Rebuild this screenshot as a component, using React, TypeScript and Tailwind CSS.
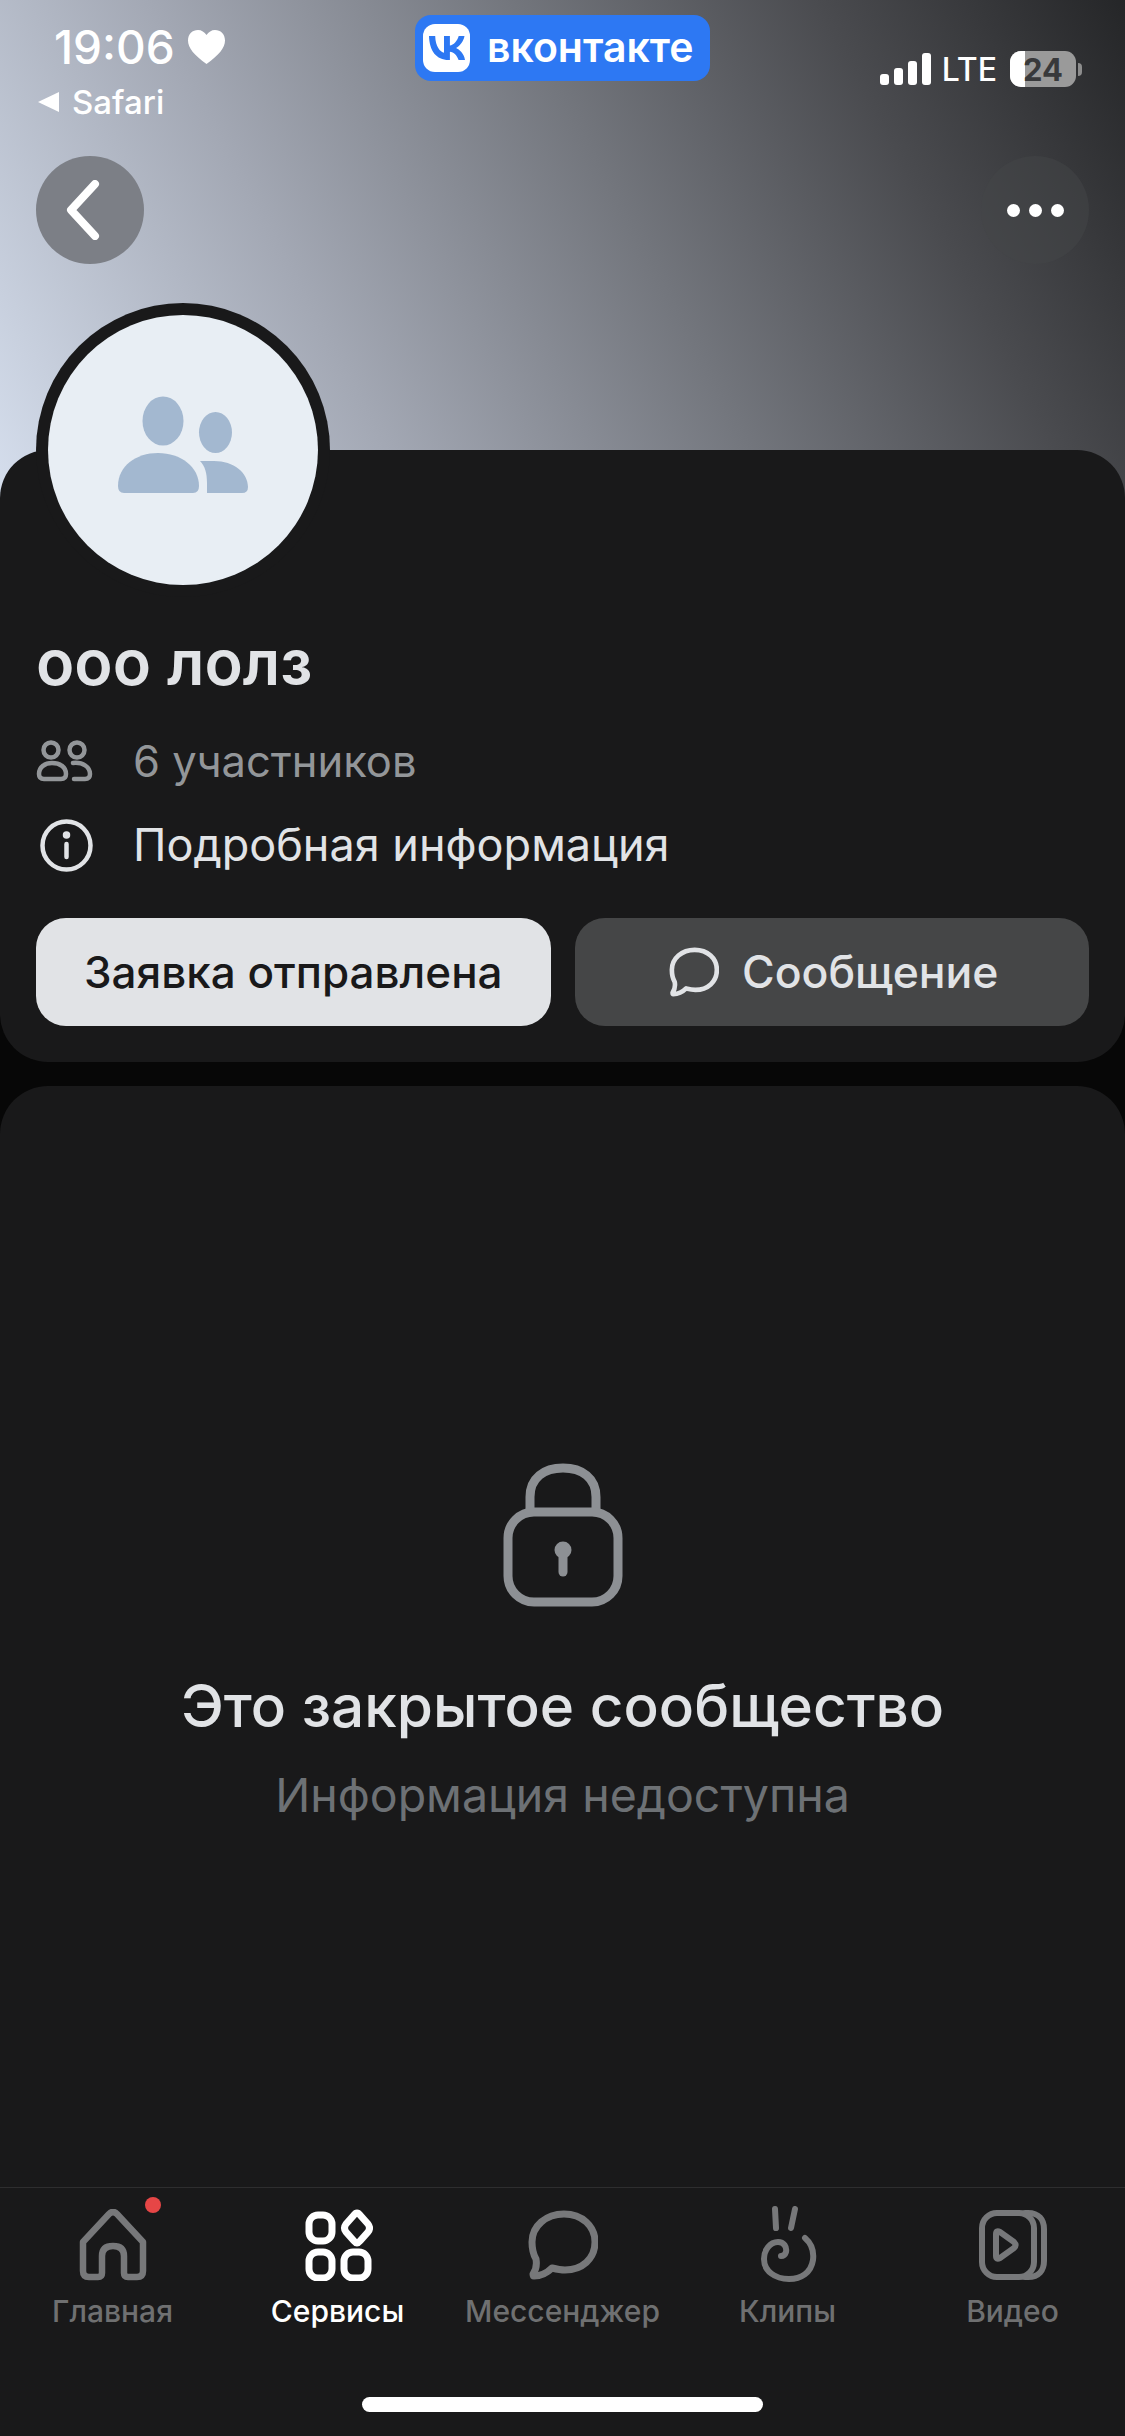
import type { ReactNode } from 'react';

const FONT = "font-['Inter','Noto_Sans',sans-serif]";

function HomeIcon() {
  return (
    <svg width="70" height="72" viewBox="0 0 70 72" fill="none" stroke="#77787a" strokeWidth="6.500" strokeLinejoin="round" strokeLinecap="round">
      <path d="M5 33 L31 5 Q35 1 39 5 L65 33 V62 Q65 68 59 68 H50 Q46 68 46 64 V47 Q46 37 35 37 Q24 37 24 47 V64 Q24 68 20 68 H11 Q5 68 5 62 Z" />
    </svg>
  );
}

function ServicesIcon() {
  return (
    <svg width="70" height="72" viewBox="0 0 70 72" fill="none" stroke="#fff" strokeWidth="7">
      <rect x="6" y="6" width="23" height="26" rx="9" />
      <rect x="6" y="43" width="23" height="26" rx="9" />
      <rect x="41" y="43" width="24" height="26" rx="9" />
      <path d="M51 6 Q54 2 57 6 L65 15 Q68 19 65 23 L57 32 Q54 36 51 32 L43 23 Q40 19 43 15 Z" strokeLinejoin="round" />
    </svg>
  );
}

function ChatIcon({ size, color, sw }: { size: number; color: string; sw: number }) {
  return (
    <svg width={size} height={size} viewBox="0 0 70 70" fill="none" stroke={color} strokeWidth={sw} strokeLinejoin="round" strokeLinecap="round">
      <path d="M36 4 C54 4 67 16 67 32 C67 49 54 60 37 60 C32 60 28 59 24 58 C20 62 13 66 6 66 C5 66 5 65 5 64 C8 60 9 55 8 49 C5 44 4 38 4 32 C4 16 18 4 36 4 Z" />
    </svg>
  );
}

function ClipsIcon() {
  return (
    <svg width="60" height="78" viewBox="0 0 60 78" fill="none" stroke="#77787a" strokeWidth="6" strokeLinecap="round">
      <path d="M17 3 L18 22" />
      <path d="M37 3 L33 22" />
      <path d="M47 32 C54 38 56 46 55 54 C53 67 43 73 31 73 C17 73 6 65 6 53 C6 44 12 36 20 36 C26 36 29 41 28 46 C27 49 25 50 23 50" />
    </svg>
  );
}

function VideoIcon() {
  return (
    <svg width="68" height="70" viewBox="0 0 68 70" fill="none" stroke="#77787a" strokeWidth="6" strokeLinejoin="round" strokeLinecap="round">
      <rect x="3" y="3" width="52" height="64" rx="15" />
      <path d="M46 3 H49 C60 3 65 10 65 19 V51 C65 60 60 67 49 67 H46" />
      <path d="M17 24 Q17 20 21 22 L35 32 Q38 35 35 38 L21 48 Q17 50 17 46 Z" />
    </svg>
  );
}

function Tab({ icon, label, active, dot }: { icon: ReactNode; label: string; active?: boolean; dot?: boolean }) {
  return (
    <div className="relative flex flex-col items-center">
      {dot && <span className="absolute left-[145px] -top-[12px] w-[16px] h-[16px] rounded-full bg-[#e64646]" />}
      <div className="h-[72px] flex items-center justify-center">{icon}</div>
      <span className={`mt-[12px] text-[30px] leading-[36px] font-medium ${active ? 'text-white' : 'text-[#6f7071]'}`}>{label}</span>
    </div>
  );
}

export default function App() {
  return (
    <div className={`${FONT} w-[1125px] h-[2436px] flex flex-col bg-[#070707] overflow-hidden`}>
      {/* Cover */}
      <div className="h-[510px] -mb-[60px] shrink-0 px-[36px] bg-[linear-gradient(62deg,#d6dfee_0%,#a3a8b4_30%,#73767d_56%,#4a4b4f_78%,#252628_100%)]">
        <div className="h-[156px] -mx-[36px] grid grid-cols-[1fr_295px_1fr]">
          <div className="pl-[37px] pt-[24px] text-white">
            <div className="flex items-center pl-[17px]">
              <span className="text-[46px] leading-[46px] font-medium">19:06</span>
              <svg className="ml-[13px]" width="37" height="34" viewBox="0 0 37 34" fill="#fff">
                <path d="M18.5 34 C6 25 0 18 0 10.5 C0 4 4.500 0 10 0 C13.500 0 16.500 2 18.500 5 C20.500 2 23.500 0 27 0 C32.500 0 37 4 37 10.500 C37 18 31 25 18.500 34 Z" />
              </svg>
            </div>
            <div className="flex items-center mt-[13px]">
              <svg width="22" height="22" viewBox="0 0 22 22" fill="#fff"><path d="M22 1 V21 L1 11 Z" /></svg>
              <span className="ml-[13px] text-[33px] leading-[38px] font-medium">Safari</span>
            </div>
          </div>

          <div className="pt-[15px]">
            <div className="h-[66px] rounded-[16px] bg-[#2d78f3] flex items-center pl-[8px] pb-[2px]">
              <div className="w-[47px] h-[48px] mt-[2px] rounded-[12px] bg-white flex items-center justify-center">
                <svg width="36" height="24" viewBox="0 0 36 24" fill="#2d78f3">
                  <path d="M19.600 24 C7.400 24 .4 15 0 0 H6.200 C6.400 11 11.300 15.700 15 16.700 V0 H20.900 V9.500 C24.500 9.100 28.400 5 29.700 0 H35.500 C34.500 5.900 30.200 10.200 27.100 12 C30.200 13.500 35.100 17.300 36 24 H29.600 C28.200 19.500 24.700 16.100 20.900 15.700 V24 Z" />
                </svg>
              </div>
              <span className="ml-[17px] text-[41px] leading-none font-semibold text-white">вконтакте</span>
            </div>
          </div>

          <div className="pt-[51px] pr-[43px] flex items-start justify-end">
            <div className="flex items-end gap-[5px] h-[33px] mt-[1px]">
              <span className="w-[9px] h-[11px] rounded-[3px] bg-white" />
              <span className="w-[9px] h-[17px] rounded-[3px] bg-white" />
              <span className="w-[9px] h-[24px] rounded-[3px] bg-white" />
              <span className="w-[9px] h-[32px] rounded-[3px] bg-white" />
            </div>
            <span className="ml-[11px] mt-[3px] text-[32px] leading-[32px] font-medium text-white">LTE</span>
            <div className="ml-[13px] relative w-[66px] h-[36px] rounded-[11px] overflow-hidden bg-[#9a9a9a]">
              <div className="absolute inset-y-0 left-0 w-[15px] bg-white" />
              <span className="absolute inset-0 flex items-center justify-center text-[31px] leading-none font-bold text-[#38393b]">24</span>
            </div>
            <span className="ml-[2px] mt-[12px] w-[4px] h-[13px] rounded-r-full bg-[#8d8d8d]" />
          </div>
        </div>

        <div className="flex justify-between">
          <div className="w-[108px] h-[108px] rounded-full bg-[#7c7f86] flex items-center justify-center">
            <svg className="mr-[14px]" width="34" height="60" viewBox="0 0 34 60" fill="none" stroke="#fff" strokeWidth="8" strokeLinecap="round" strokeLinejoin="round">
              <path d="M29 4 L5 30 L29 56" />
            </svg>
          </div>
          <div className="w-[108px] h-[108px] rounded-full bg-[#44454880] flex items-center justify-center gap-[9px]">
            <span className="w-[13px] h-[13px] rounded-full bg-white" />
            <span className="w-[13px] h-[13px] rounded-full bg-white" />
            <span className="w-[13px] h-[13px] rounded-full bg-white" />
          </div>
        </div>
      </div>

      {/* Community card */}
      <div className="relative shrink-0 h-[612px] rounded-[48px] bg-[#19191a] px-[36px]">
        <div className="-mt-[147px] w-[294px] h-[294px] rounded-full bg-[#19191a] p-[12px]">
          <div className="w-full h-full rounded-full bg-[#e8eef4]">
            <svg width="270" height="270" viewBox="0 0 270 270" fill="#a3b8d0">
              <ellipse cx="115" cy="106" rx="20.500" ry="24.500" />
              <path d="M70 171 C70 151 88 138 110 138 C133 138 151 152 151 171 Q151 178 145 178 H76 Q70 178 70 171 Z" />
              <ellipse cx="167.500" cy="117.500" rx="16.500" ry="20.500" />
              <path d="M152 146 H166 C186 146 200 158 200 172 Q200 178 194 178 H159 V168 C159 158 157 151 152 146 Z" />
            </svg>
          </div>
        </div>

        <h1 className="mt-[29px] text-[63px] leading-[72px] font-semibold text-[#e1e3e6]">ооо лолз</h1>

        <div className="mt-[33px] flex items-center h-[60px]">
          <svg className="w-[57px]" width="57" height="42" viewBox="0 0 57 42" fill="none" stroke="#939699" strokeWidth="4.500">
            <circle cx="15" cy="10" r="7.500" />
            <circle cx="41" cy="10" r="7.500" />
            <path d="M3 34 C3 27 9 23 16 23 C24 23 30 27 30 34 Q30 39 25 39 H8 Q3 39 3 34 Z" />
            <path d="M37 23 C47 22 54 27 54 34 Q54 39 49 39 H38" strokeLinecap="round" />
          </svg>
          <span className="ml-[40px] text-[43.500px] leading-[60px] text-[#939699]">6 участников</span>
        </div>

        <div className="mt-[24px] flex items-center h-[60px]">
          <svg className="ml-[4px]" width="53" height="53" viewBox="0 0 53 53" fill="none" stroke="#e1e3e6" strokeWidth="4.500" strokeLinecap="round">
            <circle cx="26.500" cy="26.500" r="24" />
            <path d="M26.500 25 V38" />
            <circle cx="26.500" cy="16" r="1.500" fill="#e1e3e6" />
          </svg>
          <span className="ml-[40px] text-[45px] leading-[60px] text-[#e1e3e6]">Подробная информация</span>
        </div>

        <div className="mt-[43px] grid grid-cols-2 gap-[24px]">
          <div className="h-[108px] rounded-[30px] bg-[#e1e3e6] flex items-center justify-center text-[44px] font-medium text-[#19191a]">
            Заявка отправлена
          </div>
          <div className="h-[108px] pl-[4px] rounded-[30px] bg-[#454647] flex items-center justify-center text-[#e1e3e6]">
            <ChatIcon size={50} color="#e1e3e6" sw={6.500} />
            <span className="ml-[23px] text-[44.500px] font-medium">Сообщение</span>
          </div>
        </div>
      </div>

      {/* Closed community placeholder */}
      <div className="mt-[24px] flex-1 rounded-t-[48px] bg-[#19191a] flex flex-col items-center">
        <svg className="mt-[377px]" width="120" height="144" viewBox="0 0 120 144" fill="none" stroke="#8d9094" strokeWidth="9" strokeLinecap="round">
          <path d="M27 47 V34 C27 15 41 5 60 5 C79 5 93 15 93 34 V47" />
          <rect x="5" y="49" width="110" height="90" rx="26" />
          <circle cx="60" cy="87" r="8.500" fill="#8d9094" stroke="none" />
          <path d="M60 90 V109" strokeWidth="9" />
        </svg>
        <h2 className="mt-[64px] text-[58.500px] leading-[70px] font-medium text-[#e1e3e6]">Это закрытое сообщество</h2>
        <p className="mt-[24px] text-[46.500px] leading-[60px] text-[#6d7175]">Информация недоступна</p>
      </div>

      {/* Tab bar */}
      <div className="h-[249px] shrink-0 bg-[#19191a] border-t border-[#2e2e2f] flex flex-col">
        <div className="pt-[21px] grid grid-cols-5">
          <Tab icon={<HomeIcon />} label="Главная" dot />
          <Tab icon={<ServicesIcon />} label="Сервисы" active />
          <Tab icon={<ChatIcon size={70} color="#77787a" sw={7} />} label="Мессенджер" />
          <Tab icon={<ClipsIcon />} label="Клипы" />
          <Tab icon={<VideoIcon />} label="Видео" />
        </div>
        <div className="mt-auto mb-[24px] mx-auto w-[401px] h-[15px] rounded-full bg-white" />
      </div>
    </div>
  );
}
